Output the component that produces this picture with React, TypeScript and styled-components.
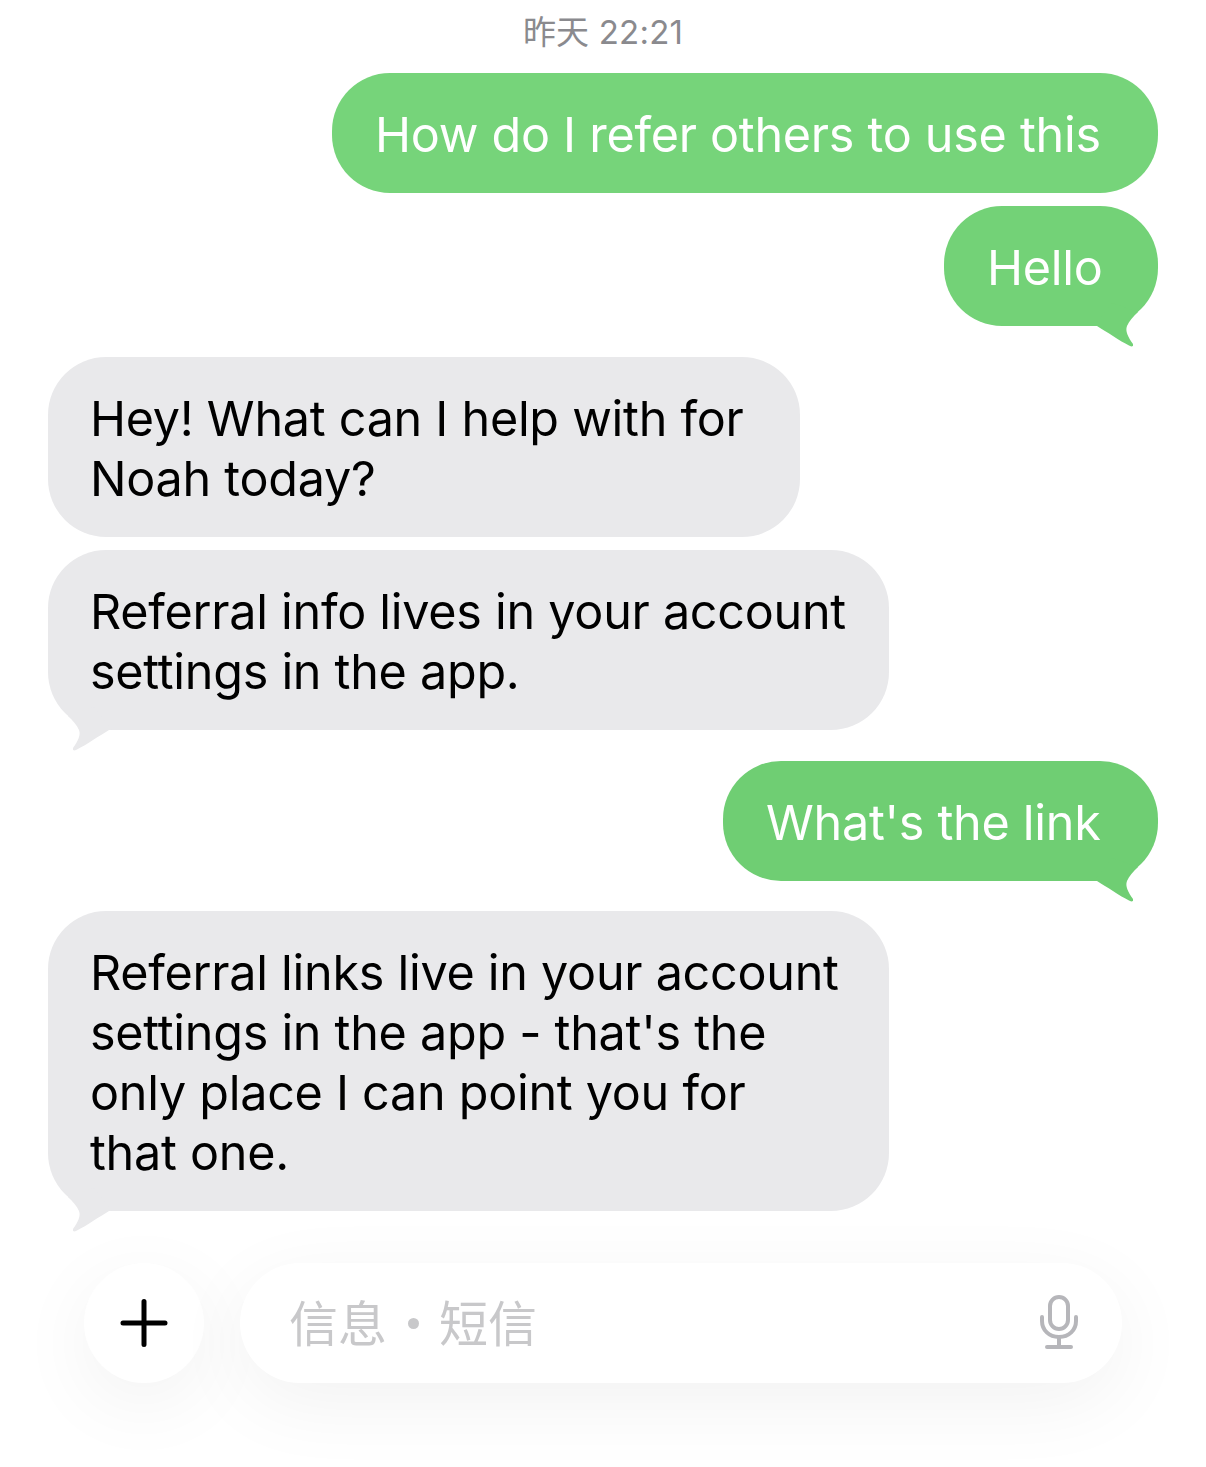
import React from 'react';
import styled, { createGlobalStyle } from 'styled-components';

const GlobalStyle = createGlobalStyle`
  html, body {
    margin: 0;
    padding: 0;
    background: #fff;
  }
`;

const Page = styled.div`
  width: 1206px;
  height: 1467px;
  overflow: hidden;
  box-sizing: border-box;
  padding: 12px 48px 0;
  display: flex;
  flex-direction: column;
  background: #fff;
  font-family: Inter, 'Noto Sans CJK SC', sans-serif;
`;

const Timestamp = styled.div`
  height: 40px;
  line-height: 40px;
  margin-bottom: 21px;
  text-align: center;
  font-size: 33px;
  letter-spacing: 0.2px;
  color: #8a8a8e;
`;

const Bubble = styled.div<{ $mine?: boolean; $width: number; $gap?: number; $shade?: string }>`
  position: relative;
  box-sizing: border-box;
  flex: none;
  width: ${(p) => p.$width}px;
  margin-top: ${(p) => p.$gap || 0}px;
  align-self: ${(p) => (p.$mine ? 'flex-end' : 'flex-start')};
  padding: 32px 0 28px ${(p) => (p.$mine ? 43 : 42)}px;
  border-radius: 58px;
  background: ${(p) => p.$shade || '#e9e9eb'};
  color: ${(p) => (p.$mine ? '#fff' : '#000')};
  font-size: 48.5px;
  line-height: 60px;
  letter-spacing: -0.27px;
  white-space: nowrap;
`;

const TailSvg = styled.svg<{ $mine?: boolean }>`
  position: absolute;
  bottom: -22px;
  ${(p) => (p.$mine ? 'right: 0;' : 'left: 0; transform: scaleX(-1);')}
`;

const Composer = styled.div`
  display: flex;
  align-items: center;
  gap: 36px;
  margin: 52px 36px 0;
`;

const PlusButton = styled.div`
  flex: none;
  width: 120px;
  height: 120px;
  border-radius: 50%;
  background: #fff;
  display: flex;
  align-items: center;
  justify-content: center;
  box-shadow: 0 20px 80px rgba(0, 0, 0, 0.055);
`;

const Field = styled.div`
  flex: 1;
  height: 120px;
  box-sizing: border-box;
  padding: 0 44px 0 49px;
  border-radius: 60px;
  background: #fff;
  display: flex;
  align-items: center;
  justify-content: space-between;
  box-shadow: 0 20px 80px rgba(0, 0, 0, 0.055);
`;

const Placeholder = styled.span`
  display: flex;
  align-items: center;
  margin-bottom: 6px;
  font-size: 49px;
  font-family: 'Noto Sans CJK SC', sans-serif;
  font-weight: 400;
  color: #c8c8ca;
`;

const Separator = styled.span`
  width: 11px;
  height: 11px;
  margin: 6px 20px 0 21px;
  border-radius: 50%;
  background: #c8c8ca;
`;

function Tail({ mine, fill }: { mine?: boolean; fill: string }) {
  return (
    <TailSvg $mine={mine} width="66" height="50" viewBox="0 0 66 50">
      <path
        d="M2 28 L5 28 C15 34 28 43 37 47.5 Q42 50 41 46 C36 39 33 33 35 28 C37 23 41 19 46 14 L20 5 Z"
        fill={fill}
      />
    </TailSvg>
  );
}

function PlusIcon() {
  return (
    <svg width="48" height="48" viewBox="0 0 48 48">
      <path d="M24 2.5 V45.5 M3 24 H45" stroke="#000" strokeWidth="5" strokeLinecap="round" fill="none" />
    </svg>
  );
}

function MicIcon() {
  return (
    <svg width="38" height="56" viewBox="0 0 38 56" fill="none" stroke="#b6b6ba" strokeWidth="4" strokeLinecap="round">
      <rect x="10" y="2" width="18" height="32" rx="9" />
      <path d="M2 22 V26 C2 35 9 42 19 42 C29 42 36 35 36 26 V22" />
      <path d="M19 42 V52 M7 52 H31" />
    </svg>
  );
}

export default function App(): JSX.Element {
  return (
    <Page>
      <GlobalStyle />
      <Timestamp>昨天 22:21</Timestamp>

      <Bubble $mine $width={826} $shade="#76d47a">
        How do I refer others to use this
      </Bubble>
      <Bubble $mine $width={214} $gap={13} $shade="#73d277">
        Hello
        <Tail mine fill="#73d277" />
      </Bubble>

      <Bubble $width={752} $gap={31}>
        Hey! What can I help with for
        <br />
        Noah today?
      </Bubble>
      <Bubble $width={841} $gap={13}>
        Referral info lives in your account
        <br />
        settings in the app.
        <Tail fill="#e9e9eb" />
      </Bubble>

      <Bubble $mine $width={435} $gap={31} $shade="#6fce73">
        What's the link
        <Tail mine fill="#6fce73" />
      </Bubble>

      <Bubble $width={841} $gap={30}>
        Referral links live in your account
        <br />
        settings in the app - that's the
        <br />
        only place I can point you for
        <br />
        that one.
        <Tail fill="#e9e9eb" />
      </Bubble>

      <Composer>
        <PlusButton>
          <PlusIcon />
        </PlusButton>
        <Field>
          <Placeholder>
            信息
            <Separator />
            短信
          </Placeholder>
          <MicIcon />
        </Field>
      </Composer>
    </Page>
  );
}
